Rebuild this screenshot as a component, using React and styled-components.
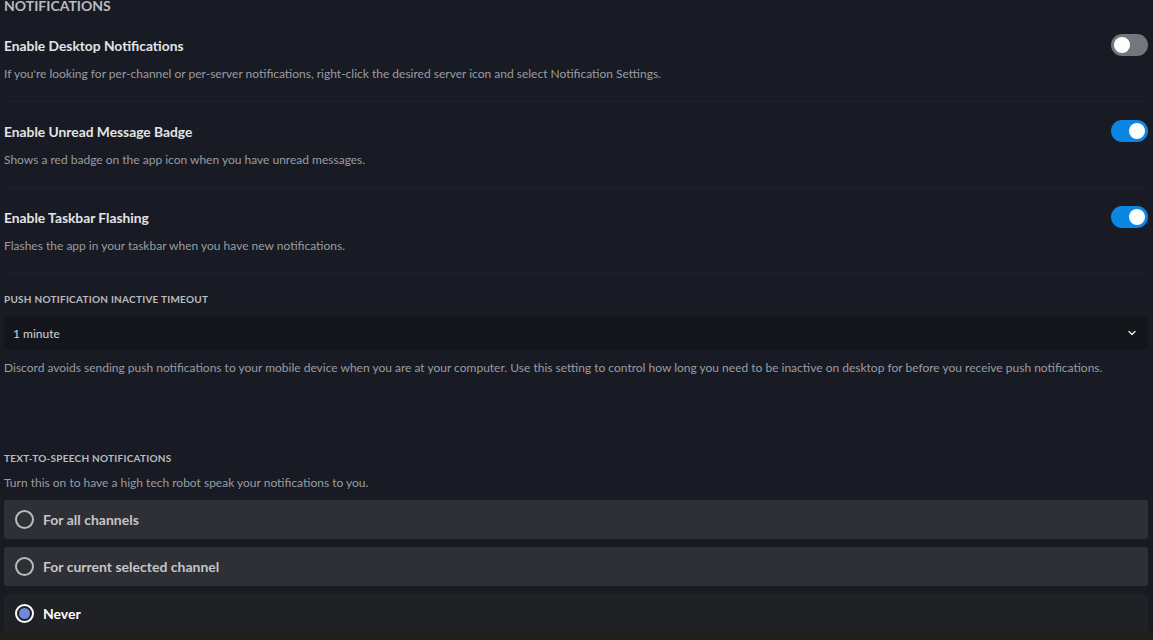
import React, { useState } from "react";
import styled, { createGlobalStyle } from "styled-components";

const GlobalStyle = createGlobalStyle`
  html, body {
    margin: 0;
    padding: 0;
    background: #201f1e;
    font-family: Lato, "Noto Sans", "Liberation Sans", sans-serif;
    -webkit-font-smoothing: antialiased;
  }
`;

const Page = styled.div`
  width: 1153px;
  height: 632px;
  overflow: hidden;
  box-sizing: border-box;
  padding: 0 5px 0 4px;
  background: #181b23;
`;

const PageTitle = styled.h2`
  margin: -2px 0 2px;
  font-size: 14px;
  line-height: 16px;
  font-weight: 700;
  text-transform: uppercase;
  color: #b9bbbe;
`;

const SettingRow = styled.div`
  padding: 19px 0 19px;
  border-bottom: 1px solid #1f222b;
`;

const RowHead = styled.div`
  display: flex;
  align-items: center;
  justify-content: space-between;
  height: 20px;
`;

const RowTitle = styled.div`
  font-size: 13.8px;
  font-weight: 700;
  color: #e3e4e6;
`;

const Note = styled.div`
  margin-top: ${(p) => p.$top || 0}px;
  font-size: 12px;
  line-height: 16px;
  color: #9a9da2;
`;

const Track = styled.button`
  position: relative;
  width: 37px;
  height: 22px;
  padding: 0;
  border: none;
  border-radius: 11px;
  background: ${(p) => (p.$on ? "#0b86e3" : "#72767d")};
  cursor: pointer;
`;

const Knob = styled.span`
  position: absolute;
  top: 3px;
  left: ${(p) => (p.$on ? "18px" : "3px")};
  width: 16px;
  height: 16px;
  border-radius: 50%;
  background: #ffffff;
`;

const SmallHeading = styled.h5`
  margin: ${(p) => p.$top || 0}px 0 0;
  font-size: 10px;
  line-height: 14px;
  font-weight: 700;
  letter-spacing: 0.25px;
  text-transform: uppercase;
  color: #b9bbbe;
`;

const Select = styled.div`
  display: flex;
  align-items: center;
  justify-content: space-between;
  height: 34px;
  margin-top: 10px;
  padding: 0 10px 0 9px;
  background: #14161c;
  border-radius: 3px;
  font-size: 12px;
  color: #d4d5d7;
`;

const RadioList = styled.div`
  display: flex;
  flex-direction: column;
  gap: 8px;
  margin-top: 9px;
`;

const RadioItem = styled.div`
  display: flex;
  align-items: center;
  gap: 9px;
  height: 39px;
  padding: 0 11px;
  border-radius: 3px;
  background: ${(p) => (p.$selected ? "#202124" : "#2e3035")};
  font-size: 14px;
  font-weight: 700;
  color: ${(p) => (p.$selected ? "#ffffff" : "#c4c6c9")};
  cursor: pointer;
`;

const Dot = styled.span`
  box-sizing: border-box;
  width: 19px;
  height: 19px;
  border-radius: 50%;
  border: 2px solid ${(p) => (p.$selected ? "#ffffff" : "#b9bbbe")};
  display: flex;
  align-items: center;
  justify-content: center;

  &::after {
    content: "";
    width: 11px;
    height: 11px;
    border-radius: 50%;
    background: ${(p) => (p.$selected ? "#7289da" : "transparent")};
  }
`;

const Toggle = ({ on, onClick }) => (
  <Track $on={on} onClick={onClick}>
    <Knob $on={on} />
  </Track>
);

const settings = [
  {
    key: "desktop",
    title: "Enable Desktop Notifications",
    note: "If you're looking for per-channel or per-server notifications, right-click the desired server icon and select Notification Settings.",
  },
  {
    key: "badge",
    title: "Enable Unread Message Badge",
    note: "Shows a red badge on the app icon when you have unread messages.",
  },
  {
    key: "flash",
    title: "Enable Taskbar Flashing",
    note: "Flashes the app in your taskbar when you have new notifications.",
  },
];

const ttsOptions = ["For all channels", "For current selected channel", "Never"];

export default function App() {
  const [toggles, setToggles] = useState({ desktop: false, badge: true, flash: true });
  const [tts, setTts] = useState("Never");

  return (
    <>
      <GlobalStyle />
      <Page>
        <PageTitle>Notifications</PageTitle>
        {settings.map((s) => (
          <SettingRow key={s.key}>
            <RowHead>
              <RowTitle>{s.title}</RowTitle>
              <Toggle
                on={toggles[s.key]}
                onClick={() => setToggles({ ...toggles, [s.key]: !toggles[s.key] })}
              />
            </RowHead>
            <Note $top={11}>{s.note}</Note>
          </SettingRow>
        ))}

        <SmallHeading $top={18}>Push Notification Inactive Timeout</SmallHeading>
        <Select>
          <span>1 minute</span>
          <svg width="12" height="12" viewBox="0 0 24 24" fill="none">
            <path d="M6 9l6 6 6-6" stroke="#dcddde" strokeWidth="3" strokeLinecap="round" strokeLinejoin="round" />
          </svg>
        </Select>
        <Note $top={10}>
          Discord avoids sending push notifications to your mobile device when you are at your computer. Use this setting to control how long you need to be inactive on desktop for before you receive push notifications.
        </Note>

        <SmallHeading $top={75}>Text-to-Speech Notifications</SmallHeading>
        <Note $top={10}>Turn this on to have a high tech robot speak your notifications to you.</Note>
        <RadioList>
          {ttsOptions.map((o) => (
            <RadioItem key={o} $selected={tts === o} onClick={() => setTts(o)}>
              <Dot $selected={tts === o} />
              {o}
            </RadioItem>
          ))}
        </RadioList>
      </Page>
    </>
  );
}
